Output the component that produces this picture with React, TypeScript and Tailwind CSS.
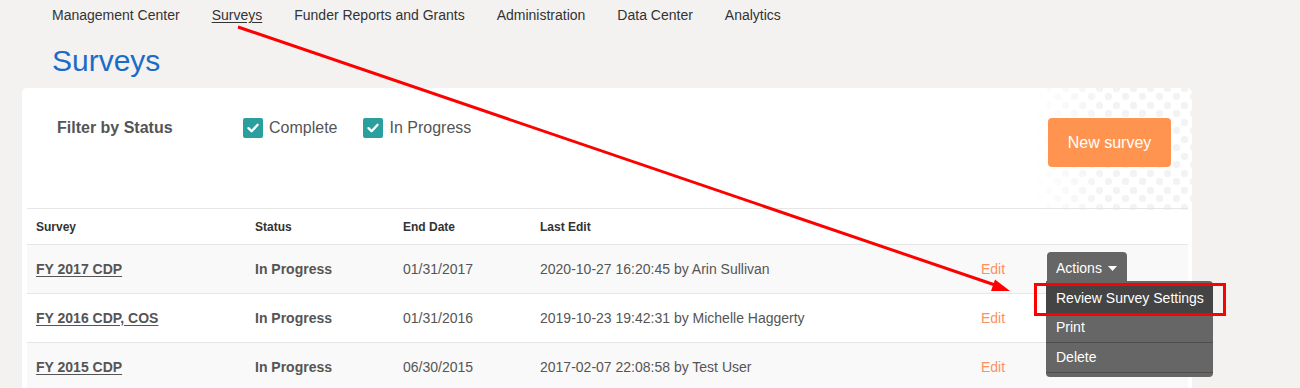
import React from 'react'

const NAV = ['Management Center', 'Surveys', 'Funder Reports and Grants', 'Administration', 'Data Center', 'Analytics']

const ROWS = [
  { name: 'FY 2017 CDP', status: 'In Progress', end: '01/31/2017', edit: '2020-10-27 16:20:45 by Arin Sullivan' },
  { name: 'FY 2016 CDP, COS', status: 'In Progress', end: '01/31/2016', edit: '2019-10-23 19:42:31 by Michelle Haggerty' },
  { name: 'FY 2015 CDP', status: 'In Progress', end: '06/30/2015', edit: '2017-02-07 22:08:58 by Test User' },
]

const COLS = 'grid grid-cols-[219px_148px_137px_441px_66px_1fr]'

function Check() {
  return (
    <span className="w-[20px] h-[20px] rounded-[2px] bg-[#2a9f9d] flex items-center justify-center">
      <svg width="14" height="14" viewBox="0 0 14 14">
        <path d="M2.5 7.2 L5.6 10.2 L11.6 3.8" fill="none" stroke="white" strokeWidth="2.4" strokeLinecap="round" strokeLinejoin="round" />
      </svg>
    </span>
  )
}

export default function App() {
  return (
    <div className="relative w-[1300px] h-[388px] overflow-hidden bg-[#f3f2f1] font-['Liberation_Sans',Arial,sans-serif]">
      {/* top nav */}
      <nav className="h-[30px] pt-[5px] pl-[52px] flex gap-8 text-[14px] leading-[20px] text-[#333]">
        {NAV.map(n => (
          <span key={n} className={n === 'Surveys' ? 'underline underline-offset-2' : ''}>{n}</span>
        ))}
      </nav>

      <h1 className="mt-[13px] mb-[9px] pl-[52px] text-[30px] leading-[36px] text-[#1b6bc8]">Surveys</h1>

      {/* card */}
      <div className="relative ml-[22px] w-[1170px] bg-white rounded-t-[5px] pb-[40px]">
        {/* dotted decoration */}
        <div className="absolute top-0 right-0 w-[160px] h-[122px] rounded-tr-[5px] bg-[radial-gradient(circle,#f3f3f3_3.4px,transparent_4px),radial-gradient(circle,#f3f3f3_3.4px,transparent_4px)] bg-[length:17px_17px,17px_17px] bg-[position:0_0,8px_9px] [mask-image:linear-gradient(to_right,transparent,black_45%)]" />

        <div className="relative flex items-start pt-[30px] pb-[41px] pl-[35px] pr-[21px]">
          <div className="w-[186px] text-[16px] leading-[20px] font-bold text-[#555]">Filter by Status</div>
          <label className="flex items-center gap-[6px] text-[16px] leading-[20px] text-[#555] mr-[26px]">
            <Check />
            Complete
          </label>
          <label className="flex items-center gap-[6px] text-[16px] leading-[20px] text-[#555]">
            <Check />
            In Progress
          </label>
          <button className="ml-auto w-[123px] h-[49px] rounded-[4px] bg-[#ff9450] text-white text-[16px]">New survey</button>
        </div>

        {/* table */}
        <div className="relative mx-[5px] mr-[4px] text-[#555]">
          <div className={`${COLS} h-[37px] items-center border-t border-b border-[#e6e6e6] text-[12px] font-bold text-[#333]`}>
            <div className="pl-[9px]">Survey</div>
            <div className="pl-[9px]">Status</div>
            <div className="pl-[9px]">End Date</div>
            <div className="pl-[9px]">Last Edit</div>
            <div />
            <div />
          </div>
          {ROWS.map((r, i) => (
            <div key={r.name} className={`${COLS} h-[49px] items-center border-b border-[#e6e6e6] text-[14px] ${i % 2 === 0 ? 'bg-[#f9f9f9]' : 'bg-white'}`}>
              <div className="pl-[9px] font-bold underline underline-offset-2">{r.name}</div>
              <div className="pl-[9px] font-bold">{r.status}</div>
              <div className="pl-[9px]">{r.end}</div>
              <div className="pl-[9px]">{r.edit}</div>
              <div className="pl-[9px] text-[#fb9160]">Edit</div>
              <div className="pl-[9px] relative">
                {i === 0 && (
                  <button className="-mt-[1px] w-[80px] h-[34px] rounded-t-[4px] bg-[#666] text-white text-[14px] flex items-center pl-[9px] gap-[6px]">
                    Actions
                    <svg width="9" height="5" viewBox="0 0 9 5"><path d="M0 0 H9 L4.5 5 Z" fill="white" /></svg>
                  </button>
                )}
              </div>
            </div>
          ))}

          {/* dropdown menu */}
          <div className="absolute left-[1019px] top-[73px] w-[167px] h-[96px] bg-[#666] rounded-b-[4px] rounded-tr-[4px] text-white text-[14px] pt-[3px]">
            <div className="h-[29px] bg-[#444] flex items-center pl-[10px]">Review Survey Settings</div>
            <div className="h-[30px] flex items-center pl-[10px] border-b border-[#4d4d4d]">Print</div>
            <div className="h-[30px] flex items-center pl-[10px] border-b border-[#4d4d4d]">Delete</div>
          </div>
        </div>
      </div>

      {/* red highlight box */}
      <div className="absolute left-[1034px] top-[283px] w-[192px] h-[33px] border-[3px] border-[#ff0000]" />

      {/* red arrow */}
      <svg className="absolute top-0 left-0 pointer-events-none" width="1300" height="388">
        <line x1="238" y1="27" x2="995" y2="285" stroke="#ff0000" strokeWidth="3" />
        <polygon points="1010,291 991,291 995,279.5" fill="#ff0000" />
      </svg>
    </div>
  )
}
